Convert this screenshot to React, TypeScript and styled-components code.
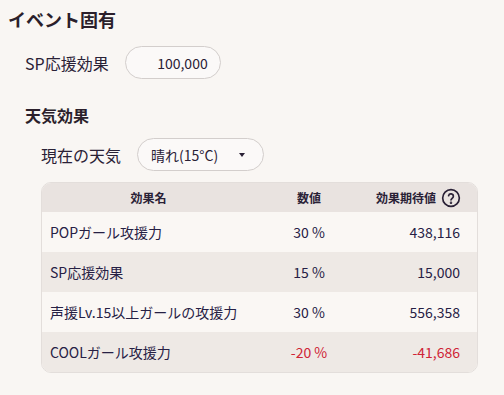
import styled, { createGlobalStyle } from "styled-components";

const GlobalStyle = createGlobalStyle`
  html, body {
    margin: 0;
    padding: 0;
    background: #f9f6f3;
  }
  body {
    font-family: "Noto Sans CJK JP", "Noto Sans", sans-serif;
    color: #2a2136;
  }
`;

const Page = styled.div`
  padding: 6px 8px 0;
`;

const Title = styled.h2`
  margin: 0 0 14px;
  font-size: 18px;
  font-weight: 700;
  line-height: 26px;
  color: #2b1f2b;
`;

const FieldRow = styled.div<{ $indent: number }>`
  display: flex;
  align-items: center;
  gap: 16px;
  padding-left: ${(p) => p.$indent}px;
`;

const Label = styled.span`
  font-size: 16px;
  line-height: 20px;
`;

const Pill = styled.div<{ $width: number }>`
  box-sizing: border-box;
  width: ${(p) => p.$width}px;
  height: 33px;
  border: 1px solid #d3cecc;
  border-radius: 17px;
  display: flex;
  align-items: center;
  font-size: 14px;
  background: #fbf9f8;
`;

const NumberPill = styled(Pill)`
  justify-content: flex-end;
  padding-right: 12px;
`;

const SelectPill = styled(Pill)`
  justify-content: space-between;
  padding: 0 18px 0 13px;
`;

const Caret = styled.span`
  width: 0;
  height: 0;
  border-left: 3px solid transparent;
  border-right: 3px solid transparent;
  border-top: 4px solid #2a2136;
`;

const SubTitle = styled.h3`
  margin: 24px 0 11px 17px;
  font-size: 16px;
  font-weight: 700;
  line-height: 24px;
  color: #2b1f2b;
`;

const Table = styled.div`
  margin: 11px 0 0 33px;
  width: 437px;
  border: 1px solid #e3dedb;
  border-radius: 10px;
  overflow: hidden;
  box-sizing: border-box;
`;

const Row = styled.div<{ $shade: string; $height: number }>`
  display: grid;
  grid-template-columns: 213px 108px 1fr;
  align-items: center;
  height: ${(p) => p.$height}px;
  background: ${(p) => p.$shade};
`;

const Head = styled.div<{ $align: string }>`
  font-size: 12px;
  font-weight: 700;
  padding-right: ${(p) => (p.$align === "right" ? 16 : 0)}px;
  display: flex;
  justify-content: ${(p) => (p.$align === "right" ? "flex-end" : "center")};
  align-items: center;
  gap: 5px;
`;

const Cell = styled.div<{ $align: string; $neg?: boolean }>`
  font-size: 14px;
  text-align: ${(p) => p.$align};
  padding: ${(p) => (p.$align === "left" ? "0 0 0 8px" : p.$align === "right" ? "0 17px 0 0" : "0")};
  color: ${(p) => (p.$neg ? "#cf2436" : "#262044")};
`;

const rows = [
  { name: "POPガール攻援力", pct: "30 %", val: "438,116" },
  { name: "SP応援効果", pct: "15 %", val: "15,000" },
  { name: "声援Lv.15以上ガールの攻援力", pct: "30 %", val: "556,358" },
  { name: "COOLガール攻援力", pct: "-20 %", val: "-41,686", neg: true },
];

const Help = () => (
  <svg width="20" height="20" viewBox="0 0 24 24" fill="none" stroke="#2a2136" strokeWidth="2" strokeLinecap="round">
    <circle cx="12" cy="12" r="10" />
    <path d="M9.1 9.2a2.9 2.9 0 0 1 5.7 0.9c0 1.9-2.8 2.5-2.8 4.3" />
    <circle cx="12" cy="17.6" r="0.5" fill="#2a2136" />
  </svg>
);

export default function App() {
  return (
    <Page>
      <GlobalStyle />
      <Title>イベント固有</Title>
      <FieldRow $indent={17}>
        <Label>SP応援効果</Label>
        <NumberPill $width={96}>100,000</NumberPill>
      </FieldRow>
      <SubTitle>天気効果</SubTitle>
      <FieldRow $indent={33}>
        <Label>現在の天気</Label>
        <SelectPill $width={127}>
          <span>晴れ(15°C)</span>
          <Caret />
        </SelectPill>
      </FieldRow>
      <Table>
        <Row $shade="#e9e3e0" $height={29}>
          <Head $align="center">効果名</Head>
          <Head $align="center">数値</Head>
          <Head $align="right">
            効果期待値 <Help />
          </Head>
        </Row>
        {rows.map((r, i) => (
          <Row key={r.name} $shade={i % 2 ? "#eee9e5" : "#faf7f4"} $height={40}>
            <Cell $align="left">{r.name}</Cell>
            <Cell $align="center" $neg={r.neg}>{r.pct}</Cell>
            <Cell $align="right" $neg={r.neg}>{r.val}</Cell>
          </Row>
        ))}
      </Table>
    </Page>
  );
}
